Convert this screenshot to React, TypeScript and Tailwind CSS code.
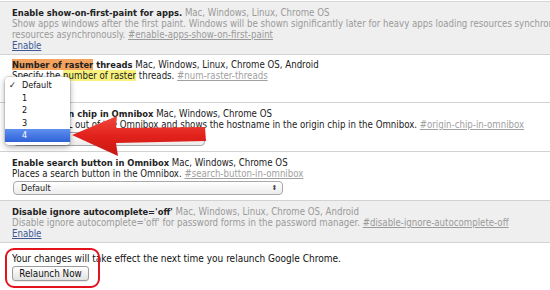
import React from 'react';

const font = { fontFamily: "'DejaVu Sans Condensed', 'Open Sans', sans-serif" };

function Select({ width }: { width: string }) {
  return (
    <div
      className={`mt-[2px] ml-[1px] flex h-[14px] items-center justify-between rounded-[4px] border border-[#a8a8a8] bg-gradient-to-b from-white to-[#ececec] pl-[7px] pr-[5px] text-[9px] text-[#222] ${width}`}
    >
      <span>Default</span>
      <span className="text-[7px] leading-none text-[#444]">⬍</span>
    </div>
  );
}

export default function App() {
  return (
    <div className="relative h-[290px] w-[550px] overflow-hidden bg-white text-[9.6px] leading-[11px] text-[#222]" style={font}>
      <div className="h-[2px] border-b border-[#d6d6d6]" />

      {/* show-on-first-paint (disabled row) */}
      <div className="border-b border-[#d2d2d2] bg-[#efefef] pb-[3px] pl-[12px] pt-[5px] text-[#9a9a9a]">
        <div className="whitespace-nowrap">
          <b className="text-[9.3px] text-[#222]">Enable show-on-first-paint for apps.</b> Mac, Windows, Linux, Chrome OS
        </div>
        <div className="whitespace-nowrap">
          Show apps windows after the first paint. Windows will be shown significantly later for heavy apps loading resources synchronous
        </div>
        <div className="whitespace-nowrap">
          resources asynchronously. <span className="underline">#enable-apps-show-on-first-paint</span>
        </div>
        <div className="text-[#3d5a96] underline">Enable</div>
      </div>

      {/* raster threads */}
      <div className="border-b border-[#d2d2d2] pb-[5px] pl-[12px] pt-[4px]">
        <div className="whitespace-nowrap">
          <b className="text-[9.3px]"><span className="bg-[#f4a35e]">Number of raster</span> threads</b> Mac, Windows, Linux, Chrome OS, Android
        </div>
        <div className="whitespace-nowrap">
          Specify the <span className="bg-[#f8f27c]">number of raster</span> threads.{' '}
          <span className="text-[#a0a0a0] underline">#num-raster-threads</span>
        </div>
        <div className="h-[16px]" />
      </div>

      {/* origin chip */}
      <div className="border-b border-[#d2d2d2] pb-[5px] pl-[12px] pt-[5px]">
        <div className="whitespace-nowrap">
          <b className="text-[9.3px]">Enable origin chip in Omnibox</b> Mac, Windows, Chrome OS
        </div>
        <div className="whitespace-nowrap">
          Takes the URL out of the Omnibox and shows the hostname in the origin chip in the Omnibox.{' '}
          <span className="text-[#a0a0a0] underline">#origin-chip-in-omnibox</span>
        </div>
        <Select width="w-[192px]" />
      </div>

      {/* search button */}
      <div className="border-b border-[#d2d2d2] pb-[5px] pl-[12px] pt-[5px]">
        <div className="whitespace-nowrap">
          <b className="text-[9.3px]">Enable search button in Omnibox</b> Mac, Windows, Chrome OS
        </div>
        <div className="whitespace-nowrap">
          Places a search button in the Omnibox.{' '}
          <span className="text-[#a0a0a0] underline">#search-button-in-omnibox</span>
        </div>
        <Select width="w-[270px]" />
      </div>

      {/* ignore autocomplete (disabled row) */}
      <div className="border-b border-[#d2d2d2] bg-[#efefef] pb-[3px] pl-[12px] pt-[5px] text-[#9a9a9a]">
        <div className="whitespace-nowrap">
          <b className="text-[9.3px] text-[#222]">Disable ignore autocomplete='off'</b> Mac, Windows, Linux, Chrome OS, Android
        </div>
        <div className="whitespace-nowrap">
          Disable ignore autocomplete='off' for password forms in the password manager.{' '}
          <span className="underline">#disable-ignore-autocomplete-off</span>
        </div>
        <div className="text-[#3d5a96] underline">Enable</div>
      </div>

      {/* relaunch */}
      <div className="pl-[12px] pt-[10px]">
        <div className="whitespace-nowrap text-[10px] leading-[12px] text-[#111]">
          Your changes will take effect the next time you relaunch Google Chrome.
        </div>
        <button className="mt-[1px] h-[15px] w-[77px] rounded-[3px] border border-[#9c9c9c] bg-gradient-to-b from-white to-[#e2e2e2] text-[9.8px] leading-none text-[#111] shadow-[0_1px_0_rgba(0,0,0,0.08)]">
          Relaunch Now
        </button>
      </div>

      {/* popup menu */}
      <div className="absolute left-[5px] top-[77px] w-[65px] rounded-[4px] bg-white pb-[3px] pt-[2px] text-[9px] leading-[12.5px] text-[#111] shadow-[0_2px_6px_rgba(0,0,0,0.35)] ring-1 ring-black/10">
        <div className="flex">
          <span className="w-[17px] pl-[4px]">✓</span>
          <span>Default</span>
        </div>
        <div className="pl-[17px]">1</div>
        <div className="pl-[17px]">2</div>
        <div className="pl-[17px]">3</div>
        <div className="bg-gradient-to-b from-[#5f8ff0] to-[#2f63d6] pl-[17px] text-white">4</div>
      </div>

      {/* red arrow */}
      <svg className="absolute left-0 top-0" width="550" height="290" viewBox="0 0 550 290">
        <defs>
          <linearGradient id="ar" x1="0" y1="0" x2="0" y2="1">
            <stop offset="0" stopColor="#f04a3e" />
            <stop offset="0.5" stopColor="#e2211b" />
            <stop offset="1" stopColor="#c81812" />
          </linearGradient>
        </defs>
        <polygon
          points="72,135 117,116 116,128 205,127 206,141 116,143 118,156"
          fill="url(#ar)"
        />
      </svg>

      {/* red highlight box */}
      <div className="absolute left-[5px] top-[248px] h-[40px] w-[95px] rounded-[9px] border-[2.5px] border-[#e3121c]" />
    </div>
  );
}
